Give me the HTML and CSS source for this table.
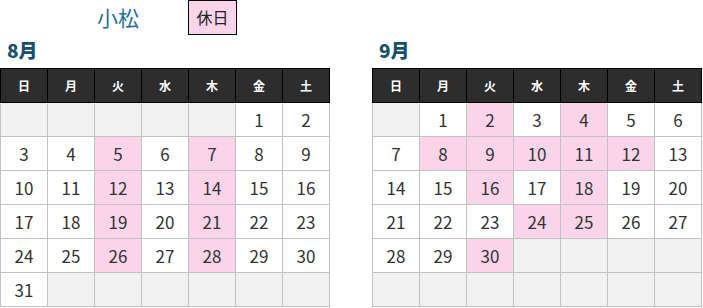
FILE: index.html
```html
<!DOCTYPE html>
<html lang="ja">
<head>
<meta charset="utf-8">
<link rel="stylesheet" href="styles.css">
</head>
<body>
<div class="top">
  <h1 class="site">小松</h1>
  <span class="badge">休日</span>
</div>
<div class="months">
  <section class="month">
    <h2 class="month-title">8月</h2>
    <table class="cal">
      <thead><tr><th>日</th><th>月</th><th>火</th><th>水</th><th>木</th><th>金</th><th>土</th></tr></thead>
      <tbody>
        <tr><td class="empty"></td><td class="empty"></td><td class="empty"></td><td class="empty"></td><td class="empty"></td><td>1</td><td>2</td></tr>
        <tr><td>3</td><td>4</td><td class="off">5</td><td>6</td><td class="off">7</td><td>8</td><td>9</td></tr>
        <tr><td>10</td><td>11</td><td class="off">12</td><td>13</td><td class="off">14</td><td>15</td><td>16</td></tr>
        <tr><td>17</td><td>18</td><td class="off">19</td><td>20</td><td class="off">21</td><td>22</td><td>23</td></tr>
        <tr><td>24</td><td>25</td><td class="off">26</td><td>27</td><td class="off">28</td><td>29</td><td>30</td></tr>
        <tr><td>31</td><td class="empty"></td><td class="empty"></td><td class="empty"></td><td class="empty"></td><td class="empty"></td><td class="empty"></td></tr>
      </tbody>
    </table>
  </section>
  <section class="month">
    <h2 class="month-title">9月</h2>
    <table class="cal">
      <thead><tr><th>日</th><th>月</th><th>火</th><th>水</th><th>木</th><th>金</th><th>土</th></tr></thead>
      <tbody>
        <tr><td class="empty"></td><td>1</td><td class="off">2</td><td>3</td><td class="off">4</td><td>5</td><td>6</td></tr>
        <tr><td>7</td><td class="off">8</td><td class="off">9</td><td class="off">10</td><td class="off">11</td><td class="off">12</td><td>13</td></tr>
        <tr><td>14</td><td>15</td><td class="off">16</td><td>17</td><td class="off">18</td><td>19</td><td>20</td></tr>
        <tr><td>21</td><td>22</td><td>23</td><td class="off">24</td><td class="off">25</td><td>26</td><td>27</td></tr>
        <tr><td>28</td><td>29</td><td class="off">30</td><td class="empty"></td><td class="empty"></td><td class="empty"></td><td class="empty"></td></tr>
        <tr><td class="empty"></td><td class="empty"></td><td class="empty"></td><td class="empty"></td><td class="empty"></td><td class="empty"></td><td class="empty"></td></tr>
      </tbody>
    </table>
  </section>
</div>
</body>
</html>
```
FILE: styles.css
```css
html, body {
  margin: 0;
  padding: 0;
  background: #fff;
}
body {
  font-family: "Noto Sans CJK JP", "Noto Sans", sans-serif;
  color: #333;
}
.top {
  display: flex;
  align-items: flex-start;
  height: 34px;
}
.site {
  margin: 0;
  padding-left: 97px;
  font-size: 21px;
  font-weight: normal;
  line-height: 35px;
  color: #1f6fa3;
}
.badge {
  margin-left: 49px;
  box-sizing: border-box;
  width: 49px;
  height: 35px;
  border: 1px solid #000;
  background: #fad5ea;
  color: #222;
  font-size: 16px;
  line-height: 33px;
  text-align: center;
}
.months {
  display: flex;
  gap: 42px;
}
.month {
  width: 330px;
}
.month-title {
  margin: 0;
  height: 34px;
  line-height: 32px;
  padding-left: 7px;
  font-size: 19px;
  font-weight: 900;
  color: #174f6e;
}
.cal {
  width: 330px;
  border-collapse: collapse;
  table-layout: fixed;
}
.cal th {
  height: 33px;
  padding: 0;
  background: #2d2d2d;
  color: #fff;
  font-size: 12px;
  font-weight: bold;
  border: 1px solid #000;
}
.cal td {
  height: 33px;
  padding: 0;
  text-align: center;
  font-size: 17px;
  color: #333;
  border: 1px solid #c2c2c2;
  background: #fff;
}
.cal td.empty {
  background: #f1f1f1;
}
.cal td.off {
  background: #fad5ea;
}
```
